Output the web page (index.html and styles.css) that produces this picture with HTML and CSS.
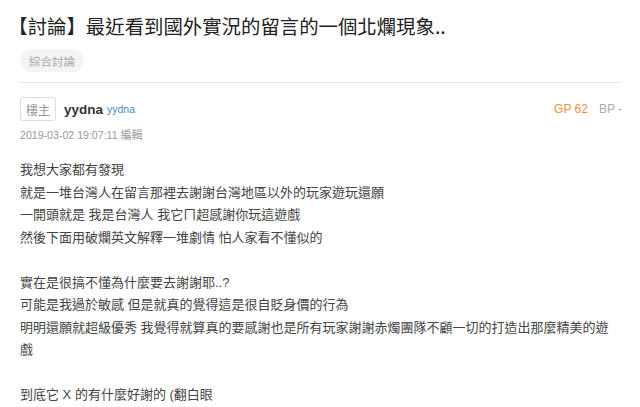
FILE: index.html
```html
<!DOCTYPE html>
<html lang="zh-Hant">
<head>
<meta charset="utf-8">
<link rel="stylesheet" href="styles.css">
</head>
<body>
<div class="page">
  <h1 class="title">【討論】最近看到國外實況的留言的一個北爛現象..</h1>
  <div class="tags"><span class="tag">綜合討論</span></div>
  <div class="post">
    <div class="post-head">
      <div class="author">
        <span class="floor">樓主</span>
        <span class="name">yydna</span>
        <span class="uid">yydna</span>
      </div>
      <div class="score">
        <span class="gp">GP 62</span>
        <span class="bp">BP -</span>
      </div>
    </div>
    <div class="date">2019-03-02 19:07:11 <span class="edit">編輯</span></div>
    <div class="content">
      <div>我想大家都有發現</div>
      <div>就是一堆台灣人在留言那裡去謝謝台灣地區以外的玩家遊玩還願</div>
      <div>一開頭就是 我是台灣人 我它ㄇ超感謝你玩這遊戲</div>
      <div>然後下面用破爛英文解釋一堆劇情 怕人家看不懂似的</div>
      <div><br></div>
      <div>實在是很搞不懂為什麼要去謝謝耶..?</div>
      <div>可能是我過於敏感 但是就真的覺得這是很自貶身價的行為</div>
      <div>明明還願就超級優秀 我覺得就算真的要感謝也是所有玩家謝謝赤燭團隊不顧一切的打造出那麼精美的遊戲</div>
      <div><br></div>
      <div>到底它 X 的有什麼好謝的 (翻白眼</div>
    </div>
  </div>
</div>
</body>
</html>
```

FILE: styles.css
```css
html, body {
  margin: 0;
  padding: 0;
  background: #fff;
}
body {
  font-family: "Liberation Sans", Arial, "Noto Sans CJK TC", sans-serif;
  color: #333;
}
.page {
  padding: 0 20px;
}
.title {
  margin: 12px 0 0 -2px;
  font-size: 19.4px;
  line-height: 28px;
  font-weight: normal;
  color: #222;
  text-spacing-trim: trim-start;
  font-family: "Noto Sans CJK TC", sans-serif;
}
.tags {
  margin-top: 9px;
  display: flex;
}
.tag {
  display: inline-flex;
  align-items: center;
  height: 23px;
  padding: 0 9px;
  border-radius: 12px;
  background: #f4f4f4;
  color: #aaa;
  font-size: 11.5px;
}
.post {
  margin-top: 10px;
  border-top: 1px solid #e6e6e6;
  padding-top: 14px;
}
.post-head {
  display: flex;
  justify-content: space-between;
  align-items: center;
}
.author {
  display: flex;
  align-items: center;
}
.floor {
  display: inline-flex;
  align-items: center;
  justify-content: center;
  box-sizing: border-box;
  width: 36px;
  height: 24px;
  border: 1px solid #ddd;
  border-radius: 3px;
  color: #999;
  font-size: 12px;
}
.name {
  margin-left: 8px;
  font-size: 13.5px;
  font-weight: bold;
  color: #333;
}
.uid {
  margin-left: 4px;
  font-size: 10.5px;
  color: #3a8fb7;
}
.score {
  display: flex;
  gap: 11px;
  font-size: 12px;
  margin-right: -2px;
}
.gp {
  color: #f0903c;
}
.bp {
  color: #aaa;
}
.date {
  margin-top: 6px;
  font-size: 10.6px;
  line-height: 16px;
  color: #999;
}
.edit {
  font-size: 11px;
}
.content {
  margin-top: 16px;
  font-size: 13px;
  line-height: 22.5px;
  color: #444;
}
```
